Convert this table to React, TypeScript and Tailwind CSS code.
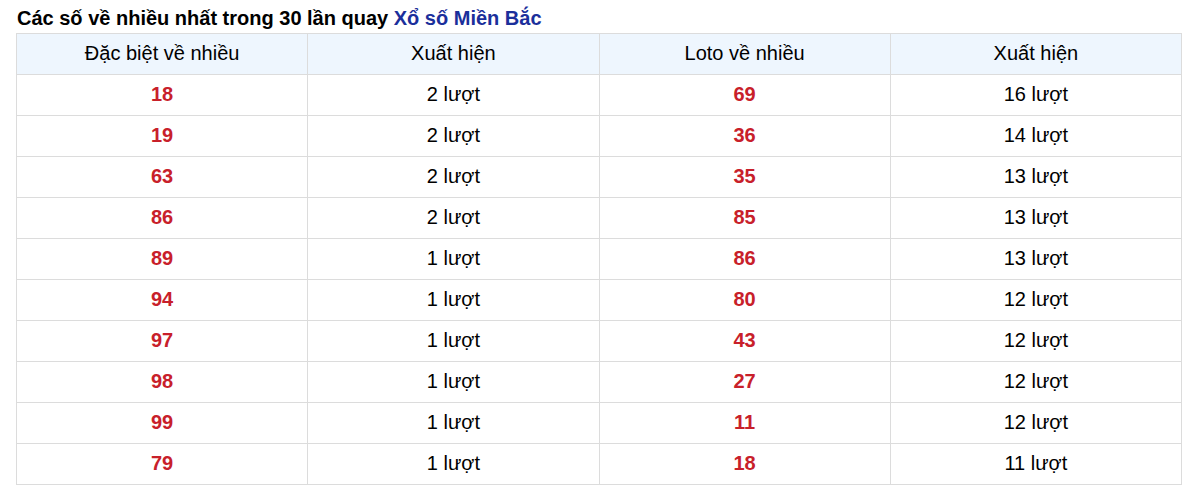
const ROWS: [string, string, string, string][] = [
  ['18', '2 lượt', '69', '16 lượt'],
  ['19', '2 lượt', '36', '14 lượt'],
  ['63', '2 lượt', '35', '13 lượt'],
  ['86', '2 lượt', '85', '13 lượt'],
  ['89', '1 lượt', '86', '13 lượt'],
  ['94', '1 lượt', '80', '12 lượt'],
  ['97', '1 lượt', '43', '12 lượt'],
  ['98', '1 lượt', '27', '12 lượt'],
  ['99', '1 lượt', '11', '12 lượt'],
  ['79', '1 lượt', '18', '11 lượt'],
];

const HEAD = ['Đặc biệt về nhiều', 'Xuất hiện', 'Loto về nhiều', 'Xuất hiện'];

export default function App() {
  return (
    <div className="h-[486px] w-[1200px] overflow-hidden bg-white pl-[16px] pt-[6px] font-['Liberation_Sans',Arial,sans-serif] text-black">
      <h2 className="pl-[1px] text-[20px] font-bold leading-[24px]">
        Các số về nhiều nhất trong 30 lần quay <span className="text-[#1b2f9b]">Xổ số Miền Bắc</span>
      </h2>
      <table className="mt-[3px] w-[1166px] table-fixed border-collapse text-[20px]">
        <thead>
          <tr className="bg-[#eef6fe]">
            {HEAD.map((h, i) => (
              <th key={i} className="h-[41px] border border-[#dcdcdc] p-0 pb-[3px] text-center font-normal">
                {h}
              </th>
            ))}
          </tr>
        </thead>
        <tbody>
          {ROWS.map((r, i) => (
            <tr key={i}>
              <td className="h-[41px] border border-[#dcdcdc] p-0 pb-[2px] text-center font-bold text-[#c8202a]">{r[0]}</td>
              <td className="h-[41px] border border-[#dcdcdc] p-0 pb-[2px] text-center">{r[1]}</td>
              <td className="h-[41px] border border-[#dcdcdc] p-0 pb-[2px] text-center font-bold text-[#c8202a]">{r[2]}</td>
              <td className="h-[41px] border border-[#dcdcdc] p-0 pb-[2px] text-center">{r[3]}</td>
            </tr>
          ))}
        </tbody>
      </table>
    </div>
  );
}
